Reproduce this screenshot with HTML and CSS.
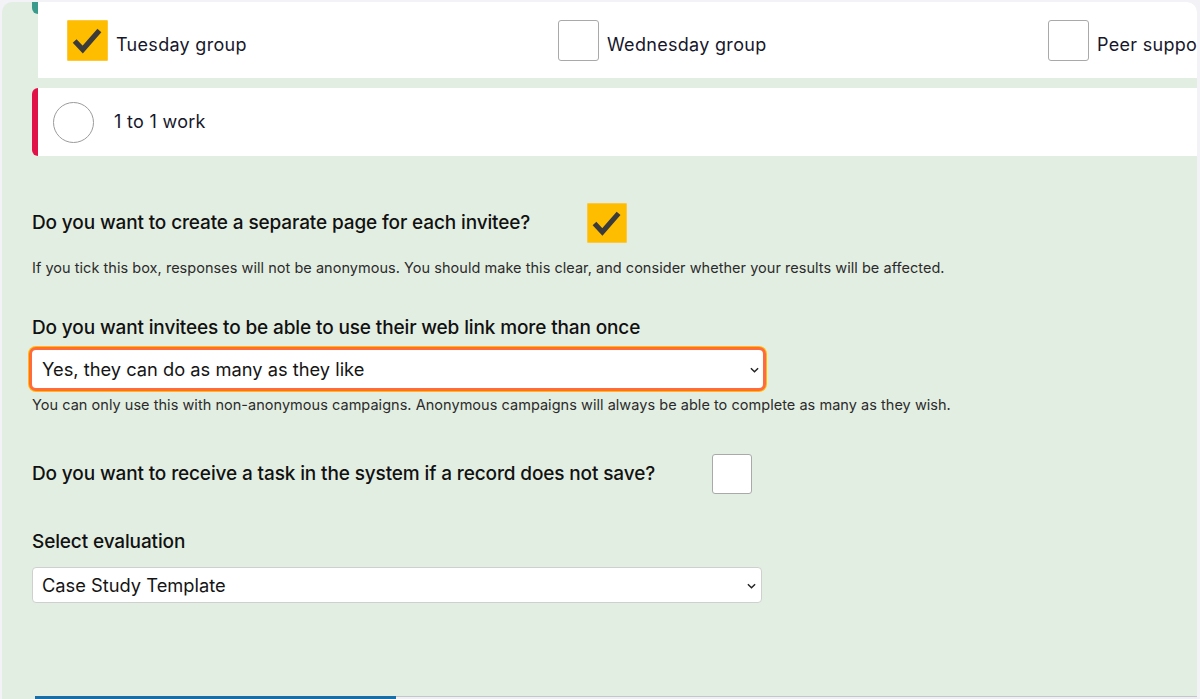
FILE: index.html
```html
<!DOCTYPE html>
<html lang="en">
<head>
<meta charset="utf-8">
<title>Campaign settings</title>
<link rel="stylesheet" href="styles.css">
</head>
<body>
<div class="frame">
  <div class="content">
    <div class="group-card">
      <div class="accent-teal"></div>
      <div class="group-body">
        <label class="opt">
          <span class="box box-checked">
            <svg viewBox="0 0 41 41" width="41" height="41"><polyline points="7,20 15.5,29 33,9" fill="none" stroke="#3b3b3b" stroke-width="5.5"/></svg>
          </span>
          <span class="opt-text">Tuesday group</span>
        </label>
        <label class="opt">
          <span class="box"></span>
          <span class="opt-text">Wednesday group</span>
        </label>
        <label class="opt">
          <span class="box"></span>
          <span class="opt-text">Peer support</span>
        </label>
      </div>
    </div>

    <div class="radio-card">
      <span class="radio"></span>
      <span class="opt-text">1 to 1 work</span>
    </div>

    <div class="form">
      <div class="row row-1">
        <span class="label">Do you want to create a separate page for each invitee?</span>
        <span class="box box-checked box-40">
          <svg viewBox="0 0 41 41" width="40" height="40"><polyline points="7,20 15.5,29 33,9" fill="none" stroke="#3b3b3b" stroke-width="5.5"/></svg>
        </span>
      </div>
      <p class="hint hint-1">If you tick this box, responses will not be anonymous. You should make this clear, and consider whether your results will be affected.</p>

      <div class="label label-2">Do you want invitees to be able to use their web link more than once</div>
      <div class="select-wrap focus">
        <select class="select select-focus">
          <option>Yes, they can do as many as they like</option>
        </select>
        <svg class="chev" viewBox="0 0 10 6" width="9" height="6"><polyline points="1,1 5,5 9,1" fill="none" stroke="#222" stroke-width="1.6"/></svg>
      </div>
      <p class="hint hint-2">You can only use this with non-anonymous campaigns. Anonymous campaigns will always be able to complete as many as they wish.</p>

      <div class="row row-3">
        <span class="label">Do you want to receive a task in the system if a record does not save?</span>
        <span class="box box-40 box-plain"></span>
      </div>

      <div class="label label-4">Select evaluation</div>
      <div class="select-wrap plain">
        <select class="select select-plain">
          <option>Case Study Template</option>
        </select>
        <svg class="chev" viewBox="0 0 10 6" width="9" height="6"><polyline points="1,1 5,5 9,1" fill="none" stroke="#222" stroke-width="1.6"/></svg>
      </div>
    </div>
  </div>
  <div class="bottom-strip"><div class="progress"></div></div>
</div>
</body>
</html>
```

FILE: styles.css
```css
html, body {
  margin: 0;
  padding: 0;
}
body {
  background: #f2f2f7;
  width: 1200px;
  height: 699px;
  overflow: hidden;
  font-family: Inter, "Noto Sans", sans-serif;
  color: #161616;
}
.frame {
  margin: 2px 3px 0 2px;
  height: 697px;
  background: #e3eee2;
  border-radius: 10px 10px 0 0;
  overflow: hidden;
  display: flex;
  flex-direction: column;
}
.content {
  padding-left: 30px;
}
.group-card {
  display: flex;
  align-items: flex-start;
  height: 76px;
}
.accent-teal {
  width: 6px;
  height: 12px;
  background: #3a9a8c;
  border-radius: 0 0 0 6px;
}
.group-body {
  flex: 1;
  height: 76px;
  background: #fff;
  display: grid;
  grid-template-columns: 491px 490px 300px;
  align-items: center;
  padding-left: 29px;
  overflow: hidden;
  white-space: nowrap;
}
.opt {
  display: flex;
  align-items: center;
  gap: 8px;
}
.opt-text {
  font-family: Inter, sans-serif;
  font-size: 18px;
  line-height: 22px;
  color: #17172b;
  letter-spacing: 0.3px;
}
.opt .opt-text {
  margin-top: 10px;
}
.box {
  width: 39px;
  height: 39px;
  border: 1px solid #a9a9a9;
  border-radius: 3px;
  background: #fff;
  display: inline-block;
  box-sizing: content-box;
  flex: none;
}
.box-checked {
  background: #ffbd00;
  border-color: #ffc73a;
  border-radius: 1px;
  display: flex;
}
.box-40 {
  width: 38px;
  height: 38px;
}
.radio-card {
  margin-top: 10px;
  height: 68px;
  background: #fff;
  border-left: 6px solid #e11248;
  border-radius: 6px 0 0 6px;
  display: flex;
  align-items: center;
  padding-left: 15px;
}
.radio {
  width: 39px;
  height: 39px;
  border: 1px solid #9b9b9b;
  border-radius: 50%;
  margin-right: 20px;
}
.form {
  padding-top: 47px;
}
.row {
  display: flex;
  align-items: center;
}
.label {
  font-family: Inter, sans-serif;
  font-weight: 500;
  font-size: 19px;
  line-height: 22px;
  color: #111;
  letter-spacing: -0.13px;
}
.row-1 .box {
  margin-left: 57px;
}
.hint {
  margin: 0;
  font-size: 14.5px;
  color: #2b2b2b;
  letter-spacing: 0.035px;
}
.hint-1 {
  margin-top: 15px;
  line-height: 20px;
}
.label-2 {
  margin-top: 39px;
}
.select-wrap {
  position: relative;
}
.select {
  appearance: none;
  -webkit-appearance: none;
  display: block;
  background: #fff;
  font-family: Inter, sans-serif;
  font-size: 18.3px;
  color: #151515;
  outline: none;
}
.focus {
  margin-top: 8px;
  margin-left: -3px;
  width: 737px;
}
.select-focus {
  width: 737px;
  height: 44px;
  border: 3px solid #ff6b3d;
  box-shadow: 0 0 0 1px #ffbd00;
  border-radius: 7px;
  padding: 0 0 0 10px;
}
.chev {
  position: absolute;
  right: 7px;
  top: 50%;
  margin-top: -2px;
}
.hint-2 {
  margin-top: 5px;
  line-height: 18px;
}
.row-3 {
  margin-top: 40px;
}
.row-3 .box {
  margin-left: 57px;
}
.label-4 {
  margin-top: 37px;
}
.plain {
  margin-top: 14px;
  width: 730px;
}
.select-plain {
  width: 730px;
  height: 36px;
  border: 1px solid #cfcfcf;
  border-radius: 4px;
  padding: 0 0 0 9px;
}
.plain .chev {
  right: 6px;
}
.bottom-strip {
  margin-top: auto;
  margin-left: 33px;
  margin-bottom: 0;
  height: 2px;
  border-top: 1px solid #c5c5cc;
  background: #f0f0f4;
}
.progress {
  width: 361px;
  height: 3px;
  margin-top: -1px;
  background: #1a6ea6;
}
```
